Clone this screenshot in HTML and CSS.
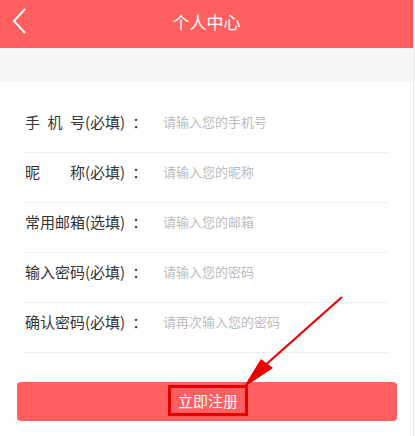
FILE: index.html
```html
<!DOCTYPE html>
<html lang="zh-CN">
<head>
<meta charset="utf-8">
<title>个人中心</title>
<link rel="stylesheet" href="styles.css">
</head>
<body>
<div class="page">
  <header class="topbar">
    <svg class="back" width="16" height="28" viewBox="0 0 16 28"><polyline points="13,2 2,14 13,26" fill="none" stroke="#fff" stroke-width="2"/></svg>
    <h1 class="title">个人中心</h1>
  </header>
  <div class="band"></div>
  <form class="form">
    <div class="row"><span class="label">手&ensp;机&ensp;号(必填)<span class="colon">：</span></span><span class="ph">请输入您的手机号</span></div>
    <div class="row"><span class="label">昵&emsp;&emsp;称(必填)<span class="colon">：</span></span><span class="ph">请输入您的昵称</span></div>
    <div class="row"><span class="label">常用邮箱(选填)<span class="colon">：</span></span><span class="ph">请输入您的邮箱</span></div>
    <div class="row"><span class="label">输入密码(必填)<span class="colon">：</span></span><span class="ph">请输入您的密码</span></div>
    <div class="row"><span class="label">确认密码(必填)<span class="colon">：</span></span><span class="ph">请再次输入您的密码</span></div>
  </form>
  <div class="btn"><span class="btn-text">立即注册</span></div>
  <svg class="arrow" width="415" height="436" viewBox="0 0 415 436">
    <line x1="342" y1="297" x2="262" y2="368" stroke="#ee0000" stroke-width="2.2"/>
    <polygon points="243,388 261,359 273,368" fill="#ee0000"/>
  </svg>
</div>
</body>
</html>
```
FILE: styles.css
```css
html, body {
  margin: 0;
  padding: 0;
  background: #fff;
}
body {
  font-family: "Noto Sans CJK SC", "Noto Sans", sans-serif;
}
.page {
  position: relative;
  width: 413px;
  height: 436px;
  border-right: 1px solid #e6e6e6;
  overflow: hidden;
}
.topbar {
  height: 48px;
  background: #ff5f5f;
  display: flex;
  align-items: center;
  justify-content: center;
  position: relative;
}
.back {
  position: absolute;
  left: 12px;
  top: 7px;
}
.title {
  margin: 0;
  font-size: 17px;
  font-weight: normal;
  color: #fff;
  line-height: 20px;
  margin-top: -4px;
}
.band {
  height: 34px;
  background: #f7f7f7;
}
.form {
  margin: 21px 25px 0 24px;
}
.row {
  display: flex;
  align-items: center;
  padding: 9px 0 20px 1px;
  line-height: 20px;
  border-bottom: 1px solid #efefef;
}
.label {
  width: 138px;
  flex: none;
  font-size: 15px;
  color: #333;
  white-space: nowrap;
}
.colon {
  padding-left: 7px;
}
.ph {
  font-size: 13px;
  color: #bbb;
}
.btn {
  margin: 29px 16px 0 17px;
  height: 39px;
  background: #ff5f5f;
  border-radius: 4px;
  display: flex;
  align-items: center;
  justify-content: center;
}
.btn-text {
  display: inline-block;
  border: 3px solid #e60000;
  padding: 0 7px;
  line-height: 25px;
  font-size: 15px;
  color: #fff;
  margin-top: -3px;
  margin-left: 2px;
}
.arrow {
  position: absolute;
  left: 0;
  top: 0;
  pointer-events: none;
}
```
